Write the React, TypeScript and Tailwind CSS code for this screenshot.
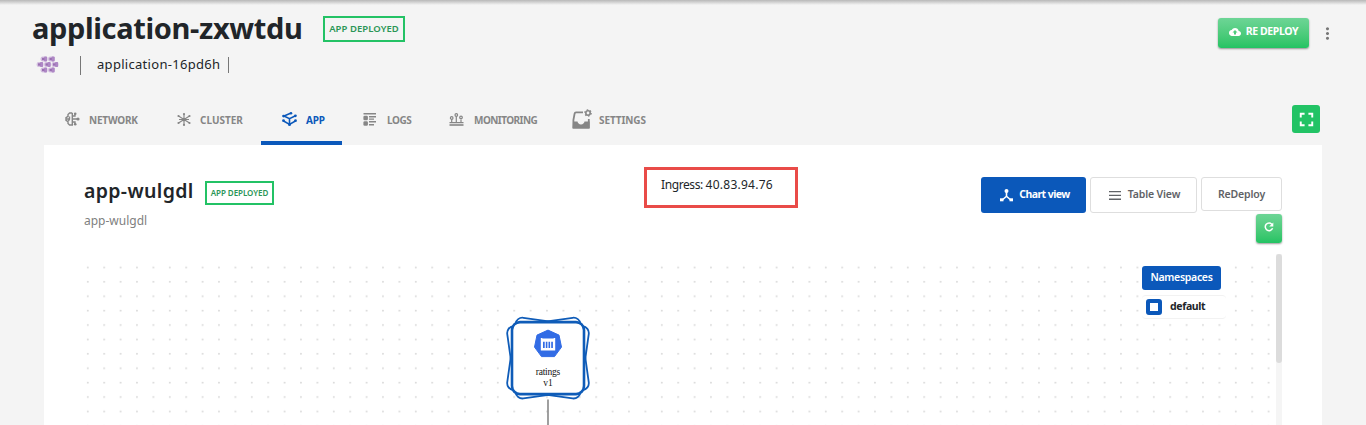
import React from "react";
import { MdCloudUpload, MdMoreVert, MdFullscreen } from "react-icons/md";

const hexDots = [
  [8, 4], [15.5, 4], [4, 9.5], [11.5, 9.5], [19, 9.5], [8, 15], [15.5, 15],
];

function ClusterLogo() {
  return (
    <svg width="23" height="20" viewBox="0 0 23 20">
      {hexDots.map(([x, y]) => (
        <g key={x + "-" + y}>
          <rect x={x - 3.4} y={y - 2.6} width="6.6" height="5.2" rx="2" fill="#d3bedf" />
          <rect x={x} y={y - 2.4} width="3.2" height="4.8" rx="1" fill="#ae87c5" />
          <rect x={x - 2} y={y - 1.2} width="2.4" height="2.4" fill="#9a6fb2" />
        </g>
      ))}
    </svg>
  );
}

function NetworkIcon() {
  return (
    <svg width="15" height="14" viewBox="0 0 15 14" fill="none" stroke="currentColor" strokeWidth="1.4">
      <path d="M7.3 1H4.6L3 2.5V4.3L1 5.6V8.4L3 9.7V11.5L4.6 13H7.3V1M1.5 7H4.5M4.5 4.5V7L3.5 9M7.3 4H10V2M7.3 7H12M7.3 10H10V12" />
      <g fill="currentColor" stroke="none">
        <circle cx="10.2" cy="1.8" r="1.3" /><circle cx="13" cy="7" r="1.6" /><circle cx="10.2" cy="12.2" r="1.3" />
      </g>
    </svg>
  );
}

function ClusterIcon() {
  return (
    <svg width="14" height="13" viewBox="0 0 14 13" stroke="currentColor" strokeWidth="1.1" fill="currentColor">
      <path d="M7 1V12M1.5 3L12.5 10M12.5 3L1.5 10M2 6.5H12" />
      <circle cx="7" cy="6.5" r="1.3" />
      <g stroke="none">
        <circle cx="7" cy="1.1" r="1.1" /><circle cx="7" cy="11.9" r="1.1" /><circle cx="1.5" cy="3" r="1.1" />
        <circle cx="12.5" cy="3" r="1.1" /><circle cx="1.5" cy="10" r="1.1" /><circle cx="12.5" cy="10" r="1.1" />
      </g>
    </svg>
  );
}

function AppIcon() {
  return (
    <svg width="15" height="14" viewBox="0 0 15 14" fill="none" stroke="currentColor" strokeWidth="1.6">
      <path d="M8.5 1.2L2 4L7.5 6.6L13 4M7.5 6.6V12.6M1.6 9L7.5 12.4L13.4 9" />
      <g fill="currentColor" stroke="none">
        <circle cx="9" cy="1.3" r="1.3" /><circle cx="1.6" cy="4.1" r="1.4" /><circle cx="13.4" cy="3.8" r="1.4" />
        <circle cx="1.5" cy="8.7" r="1.4" /><circle cx="13.5" cy="8.7" r="1.4" /><circle cx="7.5" cy="12.4" r="1.5" />
      </g>
    </svg>
  );
}

function LogsIcon() {
  return (
    <svg width="14" height="13" viewBox="0 0 14 13" fill="currentColor">
      <path d="M0.5 0H13V1.4H.5zM6 3H13V4.4H6zM6 5.5H11V6.7H6zM6 8H13V9.4H6zM6 11H11V12.4H6z" />
      <rect x="0.4" y="2.7" width="4.5" height="4.5" rx="1.3" /><rect x="0.4" y="8.3" width="4.5" height="4.5" rx="1.3" />
    </svg>
  );
}

function MonitoringIcon() {
  return (
    <svg width="15" height="13" viewBox="0 0 15 13" fill="none" stroke="currentColor" strokeWidth="1.2">
      <path d="M0.5 12H14.5" strokeWidth="1.6" />
      <path d="M0.5 9.6H14.5M2.7 9.4V6.5M7.3 9.4V3.5M12 9.4V6.5" />
      <circle cx="2.7" cy="5" r="1.3" /><circle cx="7.3" cy="2" r="1.3" /><circle cx="12" cy="4.4" r="1.3" />
    </svg>
  );
}

function SettingsIcon() {
  return (
    <svg width="20" height="20" viewBox="0 0 20 20" fill="none" stroke="currentColor">
      <path d="M11 3.4H4Q2.8 3.4 2.6 4.6L1.4 11V18.5H16.8V10" strokeWidth="1.8" />
      <path d="M1 12.6H5.5Q6 15.4 9 15.4T12.5 12.6H17.6V18.7Q17.6 19.4 17 19.4H1.2Q.6 19.4 .6 18.7Z" fill="currentColor" stroke="none" />
      <circle cx="16" cy="4" r="2.2" strokeWidth="1.6" />
      <circle cx="16" cy="4" r="3.2" strokeWidth="1.2" strokeDasharray="1.5 1.85" />
    </svg>
  );
}

function ChartIcon() {
  return (
    <svg width="13" height="13" viewBox="0 0 13 13" fill="currentColor">
      <circle cx="6.5" cy="2" r="2" />
      <path d="M5.7 3H7.3V7L11 10.2L10 11.3L6.5 8.2L3 11.3L2 10.2L5.7 7z" />
      <rect x="0" y="9.3" width="3.5" height="3" /><rect x="9.5" y="9.3" width="3.5" height="3" />
    </svg>
  );
}

function MenuIcon() {
  return (
    <svg width="12" height="9" viewBox="0 0 12 9" fill="currentColor">
      <path d="M0 0H12V1.3H0zM0 3.8H12V5.1H0zM0 7.6H12V8.9H0z" />
    </svg>
  );
}

function RefreshIcon() {
  return (
    <svg width="10" height="10" viewBox="0 0 10 10" fill="none" stroke="currentColor" strokeWidth="1.5">
      <path d="M8 2.4A3.8 3.8 0 1 0 8.6 6.3" />
      <path d="M9.3 0.5V4.6H5.2Z" fill="currentColor" stroke="none" />
    </svg>
  );
}

function DotGrid() {
  return (
    <svg width="1188" height="165" className="absolute inset-0">
      <defs>
        <pattern id="dots" width="16.4" height="14.4" patternUnits="userSpaceOnUse">
          <circle cx="3.8" cy="7.5" r="0.95" fill="#d8d8d8" />
        </pattern>
      </defs>
      <rect width="1188" height="165" fill="url(#dots)" />
    </svg>
  );
}

function RatingsNode() {
  return (
    <svg width="90" height="116" viewBox="0 -0.6 90 116" className="block">
      <g fill="none" stroke="#0f5cb8" strokeWidth="1.8">
        <rect x="8" y="7" width="74" height="73" rx="7" fill="#fff" transform="rotate(8 45 43.5)" />
        <rect x="8" y="7" width="74" height="73" rx="7" fill="#fff" transform="rotate(-8 45 43.5)" />
        <rect x="9" y="7.5" width="72" height="72" rx="8" fill="#fff" strokeWidth="2.6" />
      </g>
      <path d="M45 15.5L56 20.5L58.5 32.5L51.5 42H38.5L31.5 32.5L34 20.5Z" fill="#326ce5" stroke="#326ce5" strokeWidth="1" strokeLinejoin="round" />
      <path d="M37.8 24V23.3H39.3V24H50.7V23.3H52.2V36H37.8Z" fill="#fff" />
      <path d="M40 27.2H41.7V33.5H40zM42.8 27.2H44.4V33.5H42.8zM45.5 27.2H47.1V33.5H45.5zM48.2 27.2H49.9V33.5H48.2z" fill="#326ce5" />
      <text x="45" y="60" textAnchor="middle" fontSize="9.5" textLength="24.5" fontFamily="Liberation Serif, serif" fill="#111">ratings</text>
      <text x="45" y="71.5" textAnchor="middle" fontSize="9.5" fontFamily="Liberation Serif, serif" fill="#111">v1</text>
      <path d="M45 85V116" stroke="#888" strokeWidth="1.6" />
    </svg>
  );
}

type TabProps = { icon: React.ReactNode; label: string; className: string; active?: boolean };

function Tab({ icon, label, className, active }: TabProps) {
  return (
    <div className={"flex h-[50px] shrink-0 items-center whitespace-nowrap text-[10px] font-bold leading-none " + (active ? "border-b-4 border-[#0b58ba] pt-0.5 text-[#0b58ba] " : "pb-0.5 text-[#868686] ") + className}>
      <span className="flex h-5 shrink-0 items-center">{icon}</span>
      <span className="pt-0.5">{label}</span>
    </div>
  );
}

export default function App() {
  return (
    <div className="flex h-[425px] w-[1366px] flex-col overflow-hidden bg-[#f4f4f4] font-['Noto_Sans',sans-serif] text-[#212529]">
      <div className="h-[5px] shrink-0 bg-linear-to-b from-[#b8b8b8] to-[#f4f4f4]" />
      <header className="flex h-[90px] shrink-0 justify-between pl-[32px] pr-[30px]">
        <div>
          <div className="flex h-12 items-center">
            <h1 className="w-[291px] whitespace-nowrap pb-[3px] text-[29px] font-bold leading-none tracking-[-0.35px]">application-zxwtdu</h1>
            <span className="flex h-[26px] w-[82px] items-center justify-center whitespace-nowrap border-2 border-[#23c265] text-[9.5px] font-semibold tracking-[0.05px] text-[#2b9657]">APP DEPLOYED</span>
          </div>
          <div className="flex h-6 items-center pl-1">
            <ClusterLogo />
            <span className="ml-[21px] h-[19px] w-px bg-[#777]" />
            <span className="ml-4 w-[131px] whitespace-nowrap pb-0.5 text-[13px] leading-none tracking-[0.3px]">application-16pd6h</span>
            <span className="h-4 w-px bg-[#777]" />
          </div>
        </div>
        <div className="mt-3 flex h-[31px] items-center">
          <button className="flex h-[30px] w-[91px] items-center justify-center gap-[5px] whitespace-nowrap rounded-[3px] bg-linear-to-b from-[#6dd596] to-[#22c363] pb-0.5 text-[10.5px] font-bold tracking-[-0.4px] text-white shadow-[0_1px_2px_#0006]">
            <MdCloudUpload size={12} />
            RE DEPLOY
          </button>
          <MdMoreVert size={19} className="-mr-[1px] ml-[9px] mt-[2px] text-[#777]" />
        </div>
      </header>
      <nav className="flex h-[50px] shrink-0 items-center pl-[65px] pr-[46px]">
        <Tab icon={<NetworkIcon />} label="NETWORK" className="w-[112px] gap-[9px] tracking-[-0.2px]" />
        <Tab icon={<ClusterIcon />} label="CLUSTER" className="w-[84px] gap-[9px]" />
        <Tab icon={<AppIcon />} label="APP" active className="w-[81px] gap-[9px] pl-[21px] tracking-[-0.2px]" />
        <Tab icon={<LogsIcon />} label="LOGS" className="ml-[21px] w-[86px] gap-[10px] tracking-[-0.4px]" />
        <Tab icon={<MonitoringIcon />} label="MONITORING" className="w-[123px] gap-[10px] tracking-[-0.55px]" />
        <Tab icon={<SettingsIcon />} label="SETTINGS" className="gap-[7px] tracking-[-0.1px]" />
        <button className="-mt-0.5 ml-auto flex size-7 items-center justify-center rounded-[3px] bg-[#22c365] text-white">
          <MdFullscreen size={23} />
        </button>
      </nav>
      <main className="mx-[44px] h-[280px] shrink-0 bg-white px-10">
        <div className="flex h-[109px]">
          <div className="w-[560px] pt-[34px]">
            <div className="flex h-7 items-center">
              <h2 className="w-[121px] whitespace-nowrap pb-1 text-[19.5px] font-semibold leading-none tracking-[0.35px]">app-wulgdl</h2>
              <span className="flex h-6 w-[69px] items-center justify-center whitespace-nowrap border-2 border-[#23c265] text-[8px] font-semibold tracking-[-0.05px] text-[#2b9657]">APP DEPLOYED</span>
            </div>
            <div className="mt-2 text-xs leading-none text-[#808080]">app-wulgdl</div>
          </div>
          <div className="mt-[22px] h-[41px] w-[154px] border-[3px] border-[#e94b48] pl-[14px] pt-[9px] text-xs leading-none"><span className="tracking-[-0.4px]">Ingress: </span><span className="tracking-[0.25px]">40.83.94.76</span></div>
          <div className="ml-auto flex w-[301px] flex-col items-end pt-8">
            <div className="flex w-full justify-between whitespace-nowrap text-[10.5px] font-semibold leading-none text-[#5f6266]">
              <button className="flex h-9 w-[105px] items-center justify-center gap-[6px] rounded-[3px] bg-[#0b58ba] pl-[3px] font-bold tracking-[-0.55px] text-white"><ChartIcon /><span className="pb-0.5">Chart view</span></button>
              <button className="flex h-9 w-[107px] items-center justify-center gap-[7px] rounded-[3px] border border-[#dedede] pl-0.5"><MenuIcon /><span className="pb-0.5 tracking-[-0.15px]">Table View</span></button>
              <button className="h-[34px] w-[81px] rounded-[3px] border border-[#dedede] tracking-[-0.15px]">ReDeploy</button>
            </div>
            <button className="mt-[1px] flex h-[29px] w-[26px] items-center justify-center rounded-[3px] bg-linear-to-b from-[#6dd596] to-[#22c363] pb-1 text-white shadow-[0_1px_2px_#0006]"><RefreshIcon /></button>
          </div>
        </div>
        <div className="flex h-[171px] justify-between">
          <div className="relative mt-[6px] flex w-[1188px] justify-between">
            <DotGrid />
            <div className="relative ml-[419px] mt-[54px]"><RatingsNode /></div>
            <div className="relative mr-[46px] mt-[6px] flex h-[54px] w-[84px] flex-col bg-white">
              <div className="flex h-6 w-[79px] items-center justify-center rounded-[3px] bg-[#0b58ba] text-[10.5px] font-semibold tracking-[-0.3px] text-white">Namespaces</div>
              <div className="mt-[5px] flex h-6 items-center rounded-sm border-y border-[#f2f2f2] pl-1 text-[10.5px] font-bold leading-none tracking-[-0.35px]">
                <span className="mr-2 size-4 rounded-[3px] border-4 border-[#0b58ba] bg-white" />
                <span className="pb-0.5">default</span>
              </div>
            </div>
          </div>
          <div className="h-full w-[6px] bg-[#f5f5f5]"><div className="h-[109px] rounded-sm bg-[#dcdcdc]" /></div>
        </div>
      </main>
    </div>
  );
}
